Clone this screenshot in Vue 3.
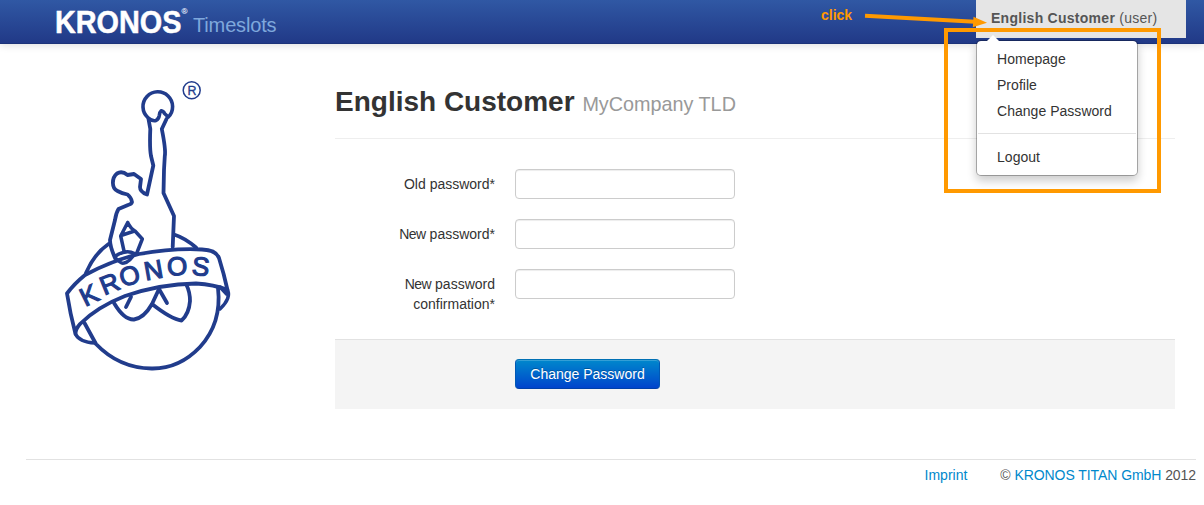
<script setup>
const fields = [
  { lead: '', text: 'Old password*' },
  { lead: 'New', text: ' password*' },
  { lead: 'New', text: ' password confirmation*' },
]
const menu = ['Homepage', 'Profile', 'Change Password']
const letters = [
  { c: 'K', x: 89, y: 295.2, r: -26 },
  { c: 'R', x: 109.5, y: 283.6, r: -22 },
  { c: 'O', x: 129.5, y: 275.8, r: -17 },
  { c: 'N', x: 153.5, y: 270, r: -10 },
  { c: 'O', x: 177, y: 266.2, r: -3 },
  { c: 'S', x: 200.8, y: 266.4, r: 6 },
]
</script>

<template>
  <div class="page">
    <header class="navbar">
      <div class="brand">
        <svg class="wordmark" width="133" height="44" viewBox="0 0 133 44">
          <text x="-1" y="33" font-size="31" font-weight="bold" textLength="126.5" lengthAdjust="spacingAndGlyphs" class="wm">KRONOS</text>
          <text x="125.500" y="14" font-size="8" class="wm-reg">®</text>
        </svg>
        <span class="product">Timeslots</span>
      </div>
      <div class="user">
        <a class="toggle"><b>English Customer</b> (user)</a>
        <div class="dropdown">
          <i class="caret"></i>
          <a v-for="m in menu" :key="m">{{ m }}</a>
          <hr>
          <a>Logout</a>
        </div>
      </div>
    </header>

    <div class="body">
      <aside>
        <svg class="logo" width="185" height="305" viewBox="55 75 185 305">
          <g fill="none" stroke="#213c8c" stroke-width="3.8" stroke-linejoin="round" stroke-linecap="round">
            <path stroke-width="3.6" d="M168.300 117 A14.800 14.800 0 1 0 147.800 117.500 Q152 121.500 156 120.500 Q158.800 119 159.300 115.500 Q159.700 112 161.300 110.700 Q163.500 111 164.500 113.500 L168.300 117" />
            <path d="M148.500 119 L150.300 129 Q149.500 148 151 156 L153.300 165.500 L147 194.500 Q140 192 140 187 L141 179 L134 174 L127.500 175 Q122 170.500 117 173.500 Q112.800 177 112.900 183 Q113 189 117.500 191 Q122 193.500 127.500 194.500 Q131 197 132 202 Q131.500 204 128 205 L118.500 209 Q116 213 115 220 L110 240 Q110 247 115.500 259" />
            <path d="M166.500 119 L161.800 129 Q166 150 164.800 156 L164 170 L163.500 193 L174 216 L172.700 247" />
            <path stroke-width="3.5" d="M127.700 222.500 L120.700 236 L124 251 M127.700 222.500 Q131 229 135 231 L142.300 239 L137 252.500 M121 235.500 L134.500 231 M115 257 Q121 264.500 124 263 Q130 262 134.500 253.500 Q126 249 115.500 256" />
            <path d="M108.500 244 Q94 254 86 273 M174 234.500 Q185 238 196 247.500" />
            <path d="M218 288 Q222 323 200 347 Q179 369 151.500 368.500 Q119 368 96 344 L84.500 323" />
            <path d="M67 293.500 Q74 284 85 275 Q111 261 139 254 Q173 248 202 249.500 Q216 250 219 258 Q224 274 227.500 290 Q214 284.500 196 283.500 Q160 284 125 296 Q97 307 80 324 Q75.500 329 75.500 334 Q70 313 67 293.500 Z" />
            <path d="M75.500 334 Q79 342 95 343 M227.500 290 Q231.500 298 220 309 M220 287 L226.500 294" stroke-width="3.4" />
            <path d="M114 303 Q124 320 134 319.500 Q144 318 152 304 L159 289 M131 297 L126 307 M159 289 L167 303 M152 304 Q171 319 181.500 320.500 Q189 314 190 301 Q190 292 186.500 285" />
            <circle cx="191.700" cy="90.300" r="8.500" stroke-width="1.5" />
          </g>
          <text class="reg" x="191.900" y="94.800">R</text>
          <text v-for="(l, i) in letters" :key="i" class="band" :transform="`translate(${l.x} ${l.y}) rotate(${l.r})`" y="9">{{ l.c }}</text>
        </svg>
      </aside>
      <main>
        <h1>English Customer <small>MyCompany TLD</small></h1>
        <form>
          <div v-for="f in fields" :key="f.text" class="row">
            <label><span class="tight">{{ f.lead }}</span>{{ f.text }}</label>
            <input type="password">
          </div>
          <div class="actions"><button type="button">Change Password</button></div>
        </form>
      </main>
    </div>

    <footer>
      <a>Imprint</a>
      <span class="copyright">© <a>KRONOS TITAN GmbH</a> 2012</span>
    </footer>

    <svg class="note" width="360" height="200" viewBox="810 0 360 200">
      <text x="821" y="20">click</text>
      <path d="M865 15.800 L975 21.700" stroke="#f90" stroke-width="4" />
      <path d="M973.500 16.700 L987 22.800 L972.800 27.300 Z" fill="#f90" />
      <rect x="946" y="30" width="213" height="161" fill="none" stroke="#f90" stroke-width="4" />
    </svg>
  </div>
</template>

<style>
body { margin: 0; background: #fff; }
</style>

<style scoped>
.page { position: relative; width: 1204px; height: 505px; overflow: hidden; font: 14px/20px "Liberation Sans", Arial, sans-serif; color: #333; }
.navbar { height: 44px; box-sizing: border-box; border-bottom: 1px solid #1c3379; display: flex; justify-content: space-between; padding: 0 18px 0 56px; background: linear-gradient(#3058a4, #213987); box-shadow: 0 1px 8px rgba(0,0,0,.14); }
.brand { display: flex; }
.wordmark { display: block; margin-right: 4px; overflow: visible; }
.wm { fill: #fff; stroke: #fff; stroke-width: .5px; }
.wm-reg { fill: #d5def0; stroke: #d5def0; stroke-width: .2px; }
.product { font-size: 20px; line-height: 50px; height: 44px; color: #7fa8dc; letter-spacing: -.15px; }
.user { position: relative; width: 210px; height: 38px; background: #e5e5e5; }
.toggle { display: block; padding: 8px 15px 0; color: #555; white-space: nowrap; letter-spacing: .27px; }
.dropdown { position: absolute; z-index: 2; left: 0; top: 40px; width: 162px; height: 136px; box-sizing: border-box; padding: 5px 1px; border: 1px solid rgba(0,0,0,.28); background: #fff; background-clip: padding-box; border-radius: 5px; box-shadow: 0 5px 10px rgba(0,0,0,.2); }
.dropdown a { display: block; padding: 3px 19px; line-height: 20px; color: #333; letter-spacing: .03px; }
.dropdown hr { border: 0; height: 1px; margin: 9px 0 10px; background: #e2e2e2; }
.caret { position: absolute; left: 10px; top: -6px; border: solid transparent; border-width: 0 6px 6px; border-bottom-color: #fff; }
.body { display: flex; height: 415px; }
aside { width: 280px; padding: 31px 0 0 55px; flex: none; }
.logo { display: block; }
.band { font-size: 26px; text-anchor: middle; fill: #213c8c; stroke: #213c8c; stroke-width: 1.2px; }
.reg { font-size: 12.5px; text-anchor: middle; fill: #213c8c; stroke: #213c8c; stroke-width: .3px; }
main { width: 840px; }
h1 { margin: 38px 0 30px; height: 56px; border-bottom: 1px solid #eee; font-size: 28px; line-height: 40px; white-space: nowrap; }
h1 small { font-size: 19.8px; font-weight: normal; color: #999; }
.row { display: flex; gap: 20px; margin-bottom: 20px; height: 30px; }
.row label { width: 160px; padding: 5px 0 0 50px; box-sizing: border-box; text-align: right; }
.tight { letter-spacing: -.5px; }
.row input { width: 220px; height: 30px; box-sizing: border-box; border: 1px solid #ccc; border-radius: 4px; box-shadow: inset 0 1px 1px rgba(0,0,0,.075); background: #fff; margin: 0; }
.actions { margin-top: 40px; height: 70px; box-sizing: border-box; border-top: 1px solid #e2e2e2; background: #f4f4f4; padding: 19px 0 0 180px; }
.actions button { display: block; width: 145px; height: 30px; padding: 0; border: 1px solid; border-color: #0070b4 #0058b4 #0040a8; border-radius: 4px; background: linear-gradient(#0088cc, #0044cc); color: #fff; font: 14px/20px "Liberation Sans", Arial, sans-serif; text-shadow: 0 -1px 0 rgba(0,0,0,.25); box-shadow: inset 0 1px 0 rgba(255,255,255,.2); }
footer { margin: 0 8px 0 26px; height: 46px; box-sizing: border-box; border-top: 1px solid #e2e2e2; padding-top: 5px; display: flex; justify-content: flex-end; gap: 33px; color: #555; }
footer a { color: #0088cc; }
.copyright { letter-spacing: -.07px; }
.note { position: absolute; left: 810px; top: 0; z-index: 3; pointer-events: none; }
.note text { font-size: 14px; font-weight: bold; fill: #f90; }
</style>
